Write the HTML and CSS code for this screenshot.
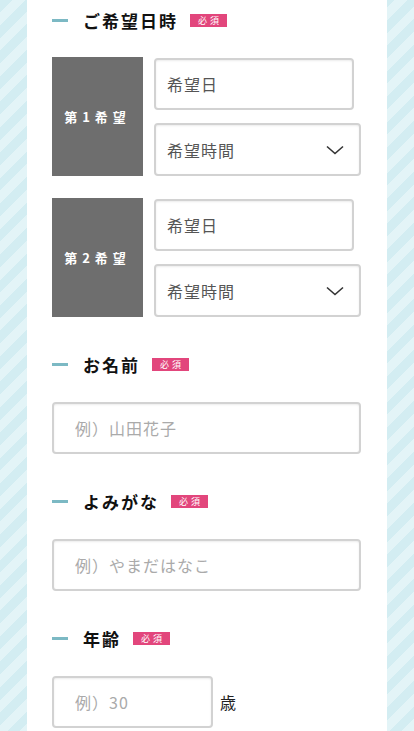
FILE: index.html
```html
<!DOCTYPE html>
<html lang="ja">
<head>
    <meta charset="UTF-8">
    <meta name="viewport" content="width=device-width, initial-scale=1.0">
    <title>ご予約フォーム</title>
    <link rel="stylesheet" href="styles.css">
</head>
<body>
    <div class="page">
        <form class="form">
            <div class="field">
                <h3 class="field-title"><span class="dash"></span>ご希望日時<span class="required">必須</span></h3>
                <div class="wish-list">
                    <div class="wish">
                        <div class="wish-label">第1希望</div>
                        <div class="wish-inputs">
                            <input type="text" class="date-input" placeholder="希望日">
                            <div class="select-wrap">
                                <select class="time-select">
                                    <option>希望時間</option>
                                </select>
                                <svg class="chevron" width="18" height="10" viewBox="0 0 18 10"><path d="M1 1.5 L9 8.5 L17 1.5" fill="none" stroke="#333" stroke-width="1.6"/></svg>
                            </div>
                        </div>
                    </div>
                    <div class="wish">
                        <div class="wish-label">第2希望</div>
                        <div class="wish-inputs">
                            <input type="text" class="date-input" placeholder="希望日">
                            <div class="select-wrap">
                                <select class="time-select">
                                    <option>希望時間</option>
                                </select>
                                <svg class="chevron" width="18" height="10" viewBox="0 0 18 10"><path d="M1 1.5 L9 8.5 L17 1.5" fill="none" stroke="#333" stroke-width="1.6"/></svg>
                            </div>
                        </div>
                    </div>
                </div>
            </div>

            <div class="field">
                <h3 class="field-title"><span class="dash"></span>お名前<span class="required">必須</span></h3>
                <input type="text" class="text-input" placeholder="例）山田花子">
            </div>

            <div class="field">
                <h3 class="field-title"><span class="dash"></span>よみがな<span class="required">必須</span></h3>
                <input type="text" class="text-input" placeholder="例）やまだはなこ">
            </div>

            <div class="field">
                <h3 class="field-title"><span class="dash"></span>年齢<span class="required">必須</span></h3>
                <div class="age-row">
                    <input type="text" class="text-input age-input" placeholder="例）30">
                    <span class="unit">歳</span>
                </div>
            </div>
        </form>
    </div>
</body>
</html>
```

FILE: styles.css
```css
body {
    margin: 0;
    font-family: "Noto Sans CJK JP", "Noto Sans", sans-serif;
    color: #222;
    background-color: #dbf0f4;
    background-image: repeating-linear-gradient(135deg, #d3edf2 0, #d3edf2 9px, #e3f4f7 9px, #e3f4f7 18px);
    min-height: 100vh;
}
.page {
    width: 360px;
    min-height: 100vh;
    margin-left: 27px;
    padding: 8px 26px 0 25px;
    box-sizing: border-box;
    background-color: white;
}
.field {
    margin-bottom: 35px;
}
.field-title {
    display: flex;
    align-items: center;
    height: 24px;
    margin: 0 0 26px;
    font-size: 17px;
    font-weight: bold;
    letter-spacing: 2px;
    color: #111;
}
.field:first-child .field-title {
    margin-bottom: 25px;
}
.dash {
    width: 16px;
    height: 3px;
    margin-right: 15px;
    background-color: #7cb9c4;
}
.required {
    margin-left: 12px;
    margin-top: 1px;
    padding: 0 5px 0 8px;
    height: 13px;
    line-height: 13px;
    font-size: 9px;
    font-weight: normal;
    letter-spacing: 3px;
    color: white;
    background-color: #e2467c;
}
.wish-list {
    display: flex;
    flex-direction: column;
    gap: 22px;
}
.wish {
    display: flex;
    gap: 11px;
    height: 119px;
}
.wish-label {
    width: 91px;
    display: flex;
    align-items: center;
    justify-content: center;
    background-color: #6e6e6e;
    color: white;
    font-size: 13px;
    font-weight: bold;
    letter-spacing: 5px;
}
.wish-inputs {
    flex: 1;
    display: flex;
    flex-direction: column;
    gap: 13px;
    padding-top: 1px;
}
input, select {
    font-family: inherit;
    font-size: 16px;
    box-sizing: border-box;
    border: 2px solid #d2d2d2;
    border-radius: 4px;
    background-color: white;
    box-shadow: inset 0 1px 2px rgba(0, 0, 0, 0.08);
    outline: none;
}
.date-input {
    width: 200px;
    height: 52px;
    padding: 0 11px;
    letter-spacing: 1px;
}
.date-input::placeholder {
    color: #555;
}
.select-wrap {
    position: relative;
}
.time-select {
    -webkit-appearance: none;
    appearance: none;
    width: 100%;
    height: 53px;
    padding: 0 11px;
    color: #555;
    letter-spacing: 1px;
}
.chevron {
    position: absolute;
    right: 17px;
    top: 22px;
    pointer-events: none;
}
.text-input {
    width: 100%;
    height: 52px;
    padding: 0 21px;
    letter-spacing: 1px;
}
.text-input::placeholder {
    color: #aaa;
}
.age-row {
    display: flex;
    align-items: center;
    gap: 7px;
}
.age-input {
    width: 161px;
}
.unit {
    font-size: 16px;
    color: #222;
}
```
